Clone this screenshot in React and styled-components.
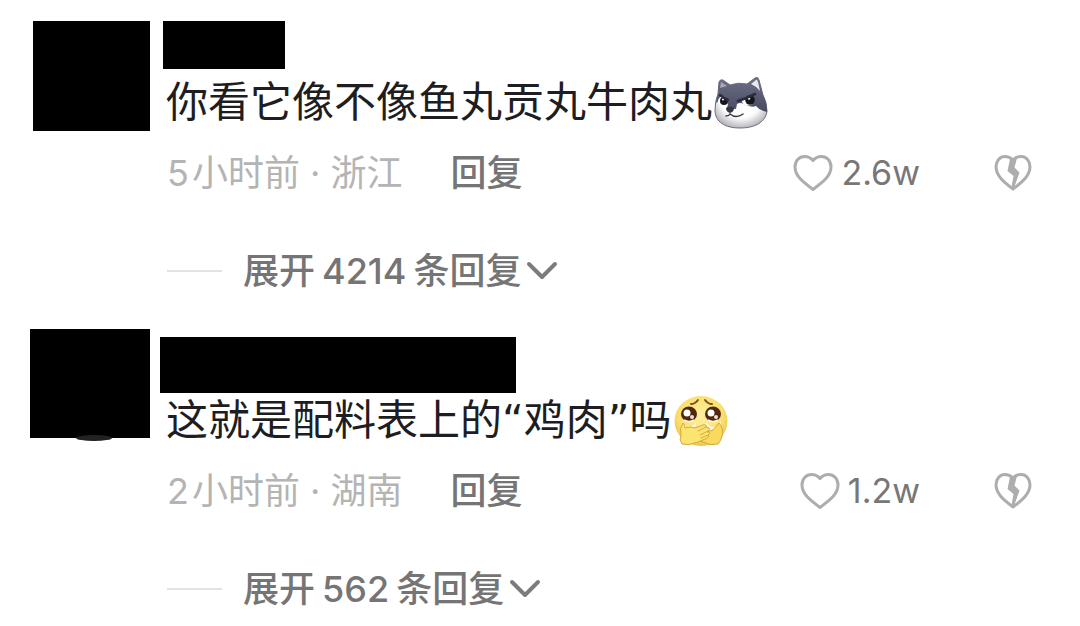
import React, { useState } from 'react'
import styled, { createGlobalStyle } from 'styled-components'

const comments = [
    {
        id: 1,
        avatar: { width: 117, height: 110 },
        name: { width: 122, height: 48, left: 13, top: 0, bottom: 6 },
        text: '你看它像不像鱼丸贡丸牛肉丸',
        Emoji: HuskyEmoji,
        time: '5',
        place: '浙江',
        likes: '2.6w',
        replies: 4214,
    },
    {
        id: 2,
        avatar: { width: 120, height: 109, edge: true },
        name: { width: 356, height: 56, left: 10, top: 8, bottom: 0 },
        text: '这就是配料表上的“鸡肉”吗',
        Emoji: ShyEmoji,
        time: '2',
        place: '湖南',
        likes: '1.2w',
        replies: 562,
    },
]

function App() {
    return (
        <>
            <GlobalStyle />
            <List>
                {comments.map((comment) =>
                    <Comment key={comment.id} {...comment} />
                )}
            </List>
        </>
    )
}

function Comment({ avatar, name, text, Emoji, time, place, likes, replies }) {
    const [liked, setLiked] = useState(false)

    return (
        <Item>
            <Avatar $width={avatar.width} $height={avatar.height} $edge={avatar.edge} />
            <Content>
                <Name $box={name} />
                <Text>
                    <span>{text}</span>
                    <Emoji />
                </Text>
                <Meta>
                    <Time><span>{time}</span><span>小时前 · {place}</span></Time>
                    <ReplyButton type="button">回复</ReplyButton>
                    <Actions>
                        <LikeButton type="button" aria-pressed={liked} onClick={() => setLiked(!liked)}>
                            <HeartIcon />
                            {likes}
                        </LikeButton>
                        <IconButton type="button" aria-label="不喜欢">
                            <BrokenHeartIcon />
                        </IconButton>
                    </Actions>
                </Meta>
                <ExpandButton type="button">
                    <Line />
                    <Label>
                        <span>展开</span>
                        <span>{replies}</span>
                        <span>条回复</span>
                    </Label>
                    <ChevronIcon />
                </ExpandButton>
            </Content>
        </Item>
    )
}

function HeartIcon() {
    return (
        <svg width="40" height="38" viewBox="0 0 40 38" fill="none" aria-hidden="true">
            <path
                d="M20 6.5C17.5 3.5 14.5 2.500 11.500 2.500C6 2.500 2 7 2 13C2 22 10 28 20 35.500C30 28 38 22 38 13C38 7 34 2.500 28.500 2.500C25.500 2.500 22.500 3.500 20 6.500Z"
                stroke="#adadad" strokeWidth="3" strokeLinejoin="round"
            />
        </svg>
    )
}

function BrokenHeartIcon() {
    return (
        <svg width="38" height="38" viewBox="0 0 38 38" fill="none" aria-hidden="true">
            <path
                d="M19 6C16.500 3.500 14 2.500 11 2.500C5.800 2.500 2 7 2 12.800C2 21.500 9.500 28 19 35C28.500 28 36 21.500 36 12.800C36 7 32.200 2.500 27 2.500C24 2.500 21.500 3.500 19 6Z"
                stroke="#adadad" strokeWidth="3" strokeLinejoin="round"
            />
            <path d="M16 5L23 4L20.500 13.500L25.500 18.500L20 34L17.500 33L19.500 22L13.500 17Z" fill="#adadad" />
        </svg>
    )
}

function ChevronIcon() {
    return (
        <svg width="32" height="20" viewBox="0 0 32 20" fill="none" aria-hidden="true">
            <path d="M3 3L16 16L29 3" stroke="#7c7c7c" strokeWidth="4" strokeLinecap="round" strokeLinejoin="round" />
        </svg>
    )
}

function HuskyEmoji() {
    return (
        <svg width="54" height="54" viewBox="5 6 54 54" role="img" aria-label="狗狗">
            <defs>
                <radialGradient id="huskyFace" cx="50%" cy="40%" r="62%">
                    <stop offset="65%" stopColor="#fdfdfe" />
                    <stop offset="100%" stopColor="#b3b2ba" />
                </radialGradient>
                <linearGradient id="huskyFur" x1="0" y1="0" x2="0" y2="1">
                    <stop offset="0%" stopColor="#6d7088" />
                    <stop offset="100%" stopColor="#484a61" />
                </linearGradient>
            </defs>
            <path d="M9 24L10 12Q11 9 14 10L21 15Q29 12 38 14L46 8Q49 6 50 10L54 25Q58 32 58 41C57 52 46 58 31 58C16 58 6 52 6 40Q6 31 9 24Z" fill="url(#huskyFace)" stroke="#6f6d77" strokeWidth="1" />
            <path d="M9 24L10 12Q11 9 14 10L21 15Q29 12 38 14L46 8Q49 6 50 10L54 25Q58 32 58 42Q51 41 47 36Q42 38 35 34Q31 32 28 34L27 39L18 38L19 34Q13 27 7 33Q7 28 9 24Z" fill="url(#huskyFur)" />
            <path d="M11 18L12 12L18 16Q14 17 11 18Z" fill="#a9a9b5" />
            <path d="M42 14L47 10Q48 9 49 12L51 21Q47 16 42 14Z" fill="#e9e8ee" />
            <ellipse cx="14" cy="31" rx="5" ry="4.500" fill="#fff" />
            <ellipse cx="39" cy="31" rx="6" ry="4.500" fill="#fff" />
            <circle cx="15" cy="31" r="4" fill="#15151a" />
            <circle cx="41" cy="30" r="4.800" fill="#15151a" />
            <circle cx="14" cy="29.500" r="1" fill="#fff" />
            <circle cx="40" cy="28.500" r="1.200" fill="#fff" />
            <path d="M11 25Q15 28 19 30M29 31Q38 28 46 24" stroke="#2b2d3d" strokeWidth="2.600" fill="none" strokeLinecap="round" />
            <path d="M17 38Q21 35 25 38Q25 42 21 43Q17 42 17 38Z" fill="#343544" />
            <path d="M17 46Q20 46 21 44Q27 49 34 44" stroke="#3a3942" strokeWidth="1.500" fill="none" strokeLinecap="round" />
        </svg>
    )
}

function ShyEmoji() {
    return (
        <svg width="54" height="54" viewBox="0 0 54 54" role="img" aria-label="捂嘴">
            <defs>
                <radialGradient id="shyFace" cx="50%" cy="40%" r="60%">
                    <stop offset="0%" stopColor="#fff1a0" />
                    <stop offset="70%" stopColor="#fbdf6d" />
                    <stop offset="100%" stopColor="#efc448" />
                </radialGradient>
            </defs>
            <ellipse cx="27" cy="27" rx="26.500" ry="25" fill="url(#shyFace)" />
            <path d="M17 10Q21 10 24 6M31 6Q34 10 38 10" stroke="#755421" strokeWidth="2" fill="none" strokeLinecap="round" />
            <path d="M8 25Q9 32 13 33Q20 33 22 28L21 37L9 39ZM32 28Q35 33 41 33Q46 31 47 25L46 39L32 37Z" fill="#fff8df" />
            <ellipse cx="15" cy="20" rx="8" ry="7.500" fill="#51270f" />
            <ellipse cx="39" cy="20" rx="8" ry="7.500" fill="#51270f" />
            <circle cx="13" cy="19" r="3.500" fill="#fff" />
            <circle cx="37" cy="19" r="3.500" fill="#fff" />
            <circle cx="18" cy="23" r="2" fill="#eee2d2" />
            <circle cx="42" cy="23" r="2" fill="#eee2d2" />
            <path d="M10 26Q15 29 20 26M34 26Q39 29 44 26" stroke="#fff8df" strokeWidth="1.500" fill="none" />
            <path d="M45 29Q50 34 48 42Q47 47 44 50Q36 52 29 48Q20 46 22 42L31 34Q35 33 33 38L39 36Z" fill="#f9d95e" stroke="#d5a840" strokeWidth="1" />
            <path d="M9 29Q11 31 11 34Q16 32 21 34L29 31Q33 30 32 33L35 34Q37 36 33 38Q38 38 34 41Q36 43 31 45L24 48Q15 52 8 50Q5 46 7 41Q5 34 9 29Z" fill="#fce471" stroke="#d5a840" strokeWidth="1" />
            <path d="M24 37L32 33M26 41L34 37M27 44L34 41" stroke="#d5a840" strokeWidth="1" strokeLinecap="round" />
        </svg>
    )
}

const GlobalStyle = createGlobalStyle`
    body{
        margin:0;
        background:#fff;
        font-family: Inter, "Noto Sans CJK SC", sans-serif;
    }
    svg{
        display:block;
        flex-shrink:0;
    }
    button{
        padding:0;
        border:0;
        background:none;
        font:inherit;
        color:inherit;
        cursor:pointer;
    }
`;

const List = styled.main`
    display:flex;
    flex-direction:column;
    gap:38px;
    padding:21px 48px 17px 0;
`;

const Item = styled.article`
    display:grid;
    grid-template-columns:150px 1fr;
    align-items:start;
`;

const Avatar = styled.div`
    position:relative;
    justify-self:end;
    width:${props => props.$width}px;
    height:${props => props.$height}px;
    background:#000;
    /* the round picture peeks out under the cover */
    &::after{
        content:'';
        display:${props => props.$edge ? 'block' : 'none'};
        position:absolute;
        left:46px;
        bottom:-3px;
        width:36px;
        height:6px;
        border-radius:50%;
        background:#222;
    }
`;

const Content = styled.div`
    min-width:0;
`;

const Name = styled.div`
    width:${props => props.$box.width}px;
    height:${props => props.$box.height}px;
    margin:${props => `${props.$box.top}px 0 ${props.$box.bottom}px ${props.$box.left}px`};
    background:#000;
`;

const Text = styled.div`
    display:flex;
    align-items:center;
    gap:2px;
    margin-left:16px;
    font-family:"DejaVu Sans", "Noto Sans CJK SC", sans-serif;
    font-size:42px;
    line-height:56px;
    color:#1d1d22;
`;

const Meta = styled.div`
    display:flex;
    align-items:center;
    margin:22px 0 58px 17px;
    font-size:36px;
    line-height:40px;
`;

const Time = styled.span`
    display:flex;
    gap:3px;
    color:#b4b4b4;
`;

const ReplyButton = styled.button`
    && {
        margin-left:48px;
        font-weight:500;
        color:#757575;
    }
`;

const Actions = styled.div`
    display:flex;
    align-items:center;
    gap:74px;
    margin-left:auto;
`;

const LikeButton = styled.button`
    && {
        display:flex;
        align-items:center;
        gap:8px;
        font-size:34px;
        color:#777;
    }
`;

const IconButton = styled.button`
    display:flex;
`;

const ExpandButton = styled.button`
    && {
        display:flex;
        align-items:center;
        margin-left:17px;
        font-size:36px;
        font-weight:500;
        line-height:40px;
        color:#757575;
    }
`;

const Line = styled.span`
    width:55px;
    height:2px;
    margin-right:21px;
    background:#e3e3e3;
`;

const Label = styled.span`
    display:flex;
    gap:7px;
    margin-right:5px;
`;

export default App;
